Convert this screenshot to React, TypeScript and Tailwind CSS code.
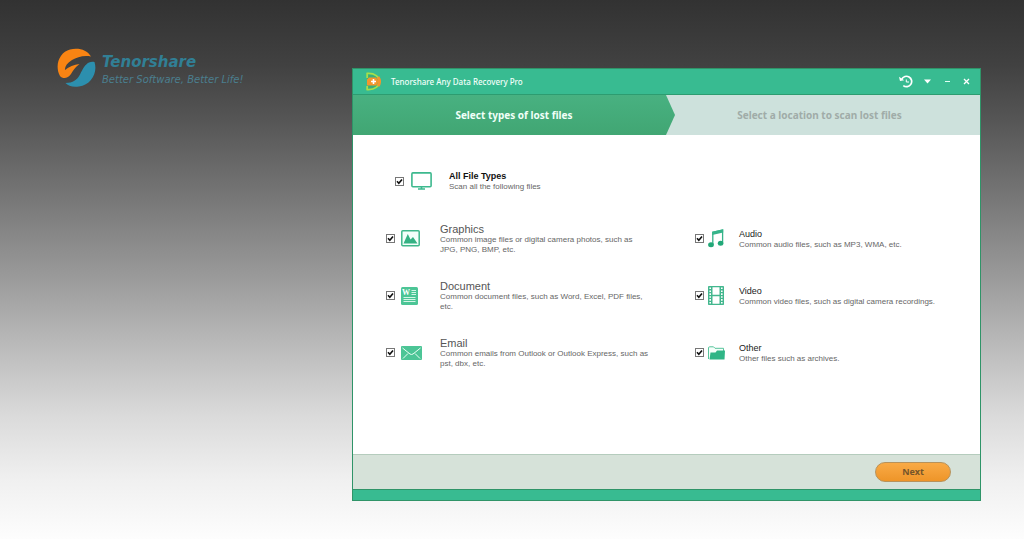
import { useState } from "react";
import type { ReactNode } from "react";

type FileType = {
  id: string;
  title: string;
  desc: string;
  icon: ReactNode;
};

const GraphicsIcon = () => (
  <svg width="19" height="17" viewBox="0 0 19 17">
    <rect x="0.8" y="0.8" width="17.4" height="15" rx="1" fill="#f4fffa" stroke="#40b78b" strokeWidth="1.5" />
    <path d="M2.5 13.5 L6.8 4 L9.5 9.5 L12 7 L16.5 13.5 Z" fill="#35b183" />
  </svg>
);

const DocumentIcon = () => (
  <svg width="17" height="18" viewBox="0 0 17 18">
    <rect width="17" height="18" rx="1.5" fill="#4cc596" />
    <text x="1" y="8" fontSize="8" className="fill-white font-['Liberation_Serif',serif] font-bold">
      W
    </text>
    <path d="M10.5 3.5h4.5M10.5 5.5h4.5M10.5 7.5h4.5M2.5 10.5h12M2.5 12.5h12M2.5 14.5h12" stroke="#e4fbf1" strokeWidth="0.9" />
  </svg>
);

const EmailIcon = () => (
  <svg width="21" height="14" viewBox="0 0 21 14">
    <rect width="21" height="14" rx="1" fill="#4cc596" />
    <path
      d="M1.5 2 L9 8 Q10.5 9 12 8 L19.5 2 M2 12.5 L7 7.5 M19 12.5 L14 7.5"
      fill="none"
      stroke="#eafff5"
      strokeWidth="1"
    />
  </svg>
);

const AudioIcon = () => (
  <svg width="16" height="19" viewBox="0 0 16 19">
    <path d="M4.8 15.5 V3.2 L14.6 1 V13.5" fill="none" stroke="#35b48a" strokeWidth="1.3" />
    <path d="M4.2 2.8 L15.2 0.3 V3.6 L4.2 6 Z" fill="#35b48a" />
    <ellipse cx="3" cy="15.8" rx="2.9" ry="2.5" fill="#22a878" />
    <ellipse cx="12.6" cy="14.3" rx="2.8" ry="2.5" fill="#22a878" />
  </svg>
);

const VideoIcon = () => (
  <svg width="16" height="19" viewBox="0 0 16 19">
    <rect width="16" height="19" rx="0.8" fill="#43b78e" />
    <path d="M4.5 1.3h7v7.5h-7zM4.5 10.2h7v7.5h-7z" fill="#fff" />
    <path d="M2.2 1.5v16.5M13.8 1.5v16.5" stroke="#fff" strokeWidth="1.6" strokeDasharray="1.6 1.3" />
  </svg>
);

const FolderIcon = () => (
  <svg width="17" height="14" viewBox="0 0 17 14">
    <path d="M0.5 13 V2 Q0.5 0.8 1.6 0.8 H5.5 L7 2.3 H15.5 V5" fill="#f4fffa" stroke="#58c49c" />
    <path d="M2.5 6.5 H7.5 L9 4.5 H17 L16.5 13.5 H1.5 Z" fill="#2fb586" />
  </svg>
);

const MonitorIcon = () => (
  <svg width="21" height="18" viewBox="0 0 21 18">
    <rect x="0.9" y="0.9" width="19.2" height="13.8" rx="1" fill="none" stroke="#3db98e" strokeWidth="1.6" />
    <path d="M10.5 14.5 V16.5 M7 17 H14" stroke="#3db98e" strokeWidth="1.6" />
  </svg>
);

const leftTypes: FileType[] = [
  {
    id: "graphics",
    title: "Graphics",
    desc: "Common image files or digital camera photos, such as JPG, PNG, BMP, etc.",
    icon: <GraphicsIcon />,
  },
  {
    id: "document",
    title: "Document",
    desc: "Common document files, such as Word, Excel, PDF files, etc.",
    icon: <DocumentIcon />,
  },
  {
    id: "email",
    title: "Email",
    desc: "Common emails from Outlook or Outlook Express, such as pst, dbx, etc.",
    icon: <EmailIcon />,
  },
];

const rightTypes: FileType[] = [
  {
    id: "audio",
    title: "Audio",
    desc: "Common audio files, such as MP3, WMA, etc.",
    icon: <AudioIcon />,
  },
  {
    id: "video",
    title: "Video",
    desc: "Common video files, such as digital camera recordings.",
    icon: <VideoIcon />,
  },
  {
    id: "other",
    title: "Other",
    desc: "Other files such as archives.",
    icon: <FolderIcon />,
  },
];

const allIds = [...leftTypes, ...rightTypes].map((t) => t.id);

interface CheckProps {
  id: string;
  checked: boolean;
  onChange: () => void;
}

function Check({ id, checked, onChange }: CheckProps) {
  return (
    <span className="relative block size-[9px] shrink-0">
      <input
        id={id}
        type="checkbox"
        checked={checked}
        onChange={onChange}
        className="peer block size-[9px] appearance-none border border-[#777] bg-white"
      />
      <svg
        viewBox="0 0 9 9"
        className="pointer-events-none absolute inset-0 hidden size-[9px] peer-checked:block"
      >
        <path d="M2 4.3 L3.8 6.3 L7 2.4" fill="none" stroke="#111" strokeWidth="1.6" />
      </svg>
    </span>
  );
}

function Logo() {
  return (
    <div className="flex items-center gap-1.5 pt-[48px] pl-[57px]">
      <svg width="39" height="40" viewBox="0 0 39 40" className="shrink-0">
        <path
          d="M3 28 C-3 17 3 4 13 1.5 C22 -0.5 30 2 34 8.5 C27 7 20 9 15 12 C10 15 7.5 19 8 22 C12 19 17 16.5 22.5 16 C18 19 16 23 14 26 C11 30.5 6 31.5 3 28 Z"
          fill="#f98413"
        />
        <path
          d="M37.5 14 C41 25 34 37 22 38.5 C16 39.5 11 38 8.5 35 C16 35 20 32 23 26.5 C26 20.5 28 16.5 32 14.5 C34 13.5 36 13.5 37.5 14 Z"
          fill="#2c8fae"
        />
      </svg>
      <div className="font-['DejaVu_Sans',sans-serif] whitespace-nowrap italic">
        <div className="text-[15px] leading-6 font-bold text-[#317f95]">Tenorshare</div>
        <div className="text-[10px] leading-3 text-[#4b7f8f]">Better Software, Better Life!</div>
      </div>
    </div>
  );
}

function TitleBar() {
  return (
    <header className="flex h-[25px] items-center bg-[#38bb91] pr-[10px] pl-[13px] text-white">
      <svg width="15" height="19" viewBox="0 0 15 19">
        <path d="M1 1.5 C9 1 13 5 13 9.5 C13 14 9 18 1 17.5 Z" fill="#38ae7c" />
        <path d="M3 5.5 H10 Q14 9.5 10 13.5 H1 V7.5 Z" fill="#f3962d" />
        <path d="M1.2 6 V1.5 C9 1 13.3 5 13.3 9.5 C13.3 14 9 18 1.2 17.5 V14" fill="none" stroke="#a6e04a" strokeWidth="1.8" />
        <path d="M12 5 Q15 9.5 12 14" fill="none" stroke="#f3962d" strokeWidth="3" />
        <path d="M7.5 7 V12 M5 9.5 H10" stroke="#fff" strokeWidth="1.6" />
      </svg>
      <h1 className="ml-[10px] text-[8px] leading-3 font-medium text-[#f2fffa]">Tenorshare Any Data Recovery Pro</h1>
      <div className="ml-auto flex items-center">
        <button type="button" aria-label="History" className="mr-[11px]">
          <svg width="14" height="13" viewBox="0 0 14 13" fill="none" stroke="#fff">
            <path d="M2.8 4.2 A5.2 5.2 0 1 1 4.3 10.6" strokeWidth="1.7" />
            <path d="M0 1.8 L1 6 L5.2 5.2 Z" fill="#fff" stroke="none" />
            <path d="M7.3 4.5 V7 H10" strokeWidth="1" />
          </svg>
        </button>
        <button type="button" aria-label="Menu" className="mr-[13px]">
          <svg width="7" height="5" viewBox="0 0 7 5">
            <path d="M0 0.5 H7 L3.5 4.5 Z" fill="#fff" />
          </svg>
        </button>
        <button type="button" aria-label="Minimize" className="mr-[12px]">
          <svg width="7" height="7" viewBox="0 0 7 7">
            <path d="M1 3.5 H6" stroke="#e0fff4" />
          </svg>
        </button>
        <button type="button" aria-label="Close">
          <svg width="7" height="7" viewBox="0 0 7 7">
            <path d="M1 1 L6 6 M6 1 L1 6" stroke="#fff" strokeWidth="1.3" />
          </svg>
        </button>
      </div>
    </header>
  );
}

interface ColumnProps {
  items: FileType[];
  selected: string[];
  onToggle: (id: string) => void;
  iconClass: string;
  titleClass: string;
}

function Column({ items, selected, onToggle, iconClass, titleClass }: ColumnProps) {
  return (
    <ul className="min-w-0">
      {items.map((item) => (
        <li key={item.id} className="flex h-[57px] items-center">
          <Check id={item.id} checked={selected.includes(item.id)} onChange={() => onToggle(item.id)} />
          <label htmlFor={item.id} className="flex items-center">
            <span className={iconClass}>{item.icon}</span>
            <span className="block max-w-[210px]">
              <span className={titleClass}>{item.title}</span>
              <span className="block text-[8px] leading-[10px] text-[#666]">{item.desc}</span>
            </span>
          </label>
        </li>
      ))}
    </ul>
  );
}

export default function App() {
  const [selected, setSelected] = useState<string[]>(allIds);

  const toggle = (id: string) =>
    setSelected((prev) => (prev.includes(id) ? prev.filter((v) => v !== id) : [...prev, id]));

  const allChecked = selected.length === allIds.length;

  return (
    <div className="flex min-h-screen items-start bg-[linear-gradient(#323232_0%,#414141_12%,#555_22%,#757575_36%,#999_51%,#bababa_64%,#dadada_77%,#f0f0f0_89%,#fdfdfd_100%)] font-['Liberation_Sans',Arial,sans-serif]">
      <div className="w-[352px] shrink-0">
        <Logo />
      </div>

      <main className="mt-[68px] mr-[43px] flex-1 border border-[#2f9468] bg-white">
        <div className="font-['Noto_Sans',sans-serif]">
          <TitleBar />
          <ol className="flex h-[41px] items-stretch border-t border-[#2d9c70] bg-[#cde1dc] text-center text-[10px] leading-4 font-bold">
            <li className="flex w-[322px] items-center justify-center bg-linear-to-b from-[#48b181] to-[#41a673] text-[#f0fff8] [clip-path:polygon(0_0,313px_0,100%_50%,313px_100%,0_100%)]">
              Select types of lost files
            </li>
            <li className="flex flex-1 items-center justify-center pr-[16px] text-[#a0aca8]">
              Select a location to scan lost files
            </li>
          </ol>
        </div>

        <section className="pt-[35px] pr-[30px] pb-[73px] pl-[33px]">
          <div className="mb-[18px] flex items-center pl-[9px]">
            <Check
              id="all"
              checked={allChecked}
              onChange={() => setSelected(allChecked ? [] : allIds)}
            />
            <label htmlFor="all" className="flex items-center">
              <span className="flex w-[45px] pl-[7px]">
                <MonitorIcon />
              </span>
              <span className="block">
                <span className="block text-[9px] leading-3 font-bold text-[#111]">All File Types</span>
                <span className="block text-[8px] leading-[10px] text-[#666]">Scan all the following files</span>
              </span>
            </label>
          </div>

          <div className="grid grid-cols-[309fr_255fr]">
            <Column
              items={leftTypes}
              selected={selected}
              onToggle={toggle}
              iconClass="flex w-[45px] shrink-0 pl-[6px]"
              titleClass="block text-[11px] leading-3 text-[#555]"
            />
            <Column
              items={rightTypes}
              selected={selected}
              onToggle={toggle}
              iconClass="flex w-[35px] shrink-0 pl-[4px]"
              titleClass="block text-[9px] leading-3 text-[#222]"
            />
          </div>
        </section>

        <footer className="font-['Noto_Sans',sans-serif]">
          <div className="flex h-[35px] items-center justify-end border-t border-[#b5ccbd] bg-[#d6e2d9] pr-[29px]">
            <button
              type="button"
              className="h-5 w-[76px] rounded-full border border-[#b8925a] bg-linear-to-b from-[#f9aa45] to-[#ee9528] text-[9px] leading-4 font-bold text-[#75552a]"
            >
              Next
            </button>
          </div>
          <div className="h-[11px] border-t border-[#2f9468] bg-[#38bb91]" />
        </footer>
      </main>
    </div>
  );
}
